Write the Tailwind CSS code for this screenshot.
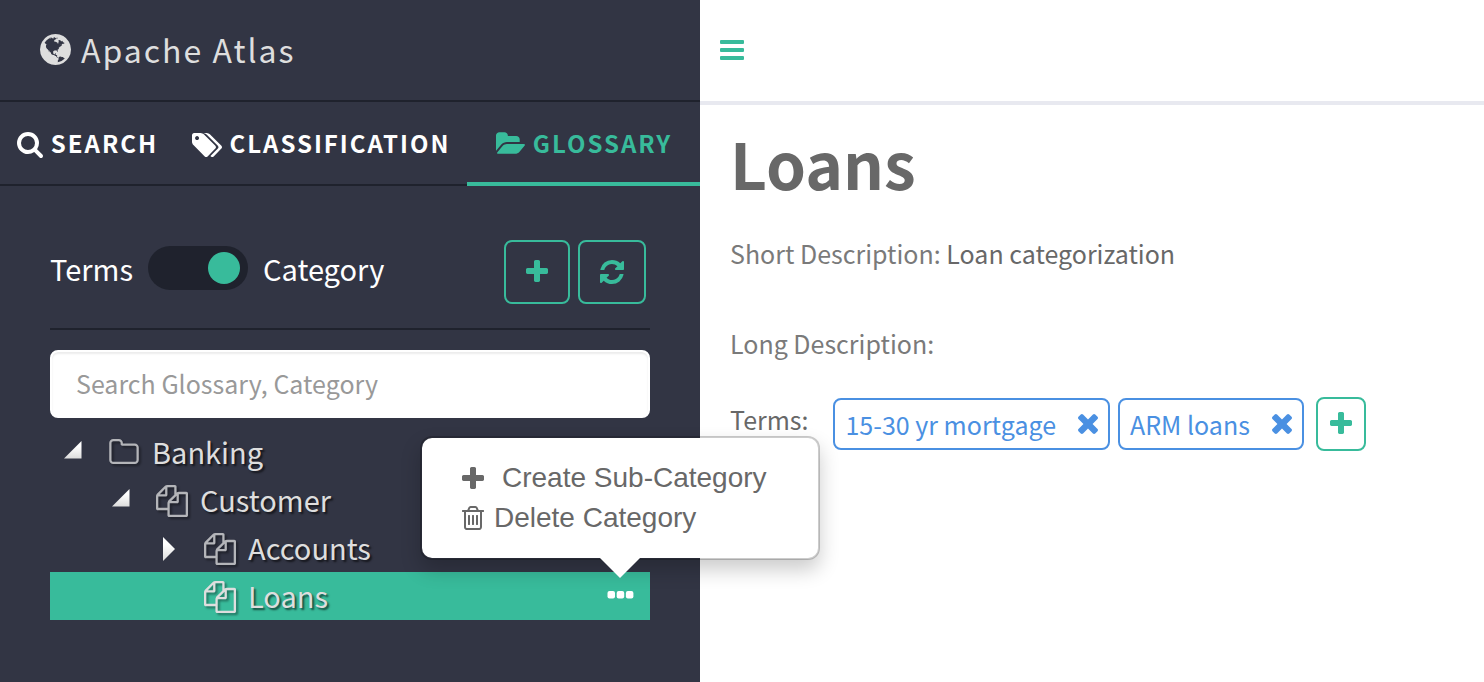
<!DOCTYPE html>
<html lang="en">
<head>
<meta charset="utf-8">
<title>Apache Atlas</title>
<script src="https://cdn.jsdelivr.net/npm/@tailwindcss/browser@4"></script>
</head>
<body class="bg-white font-['Noto_Sans_CJK_SC',sans-serif] text-[25px] leading-9 text-[#686868]">
<svg class="absolute size-0" aria-hidden="true">
  <symbol id="globe" viewBox="128 128 1536 1536"><path d="M896 128q209 0 385.5 103t279.5 279.5 103 385.5-103 385.5-279.5 279.5-385.5 103-385.5-103-279.5-279.5-103-385.5 103-385.5 279.5-279.5 385.5-103zm274 521q-2 1-9.5 9.5t-13.5 9.5q2 0 4.5-5t5-11 3.5-7q6-7 22-15 14-6 52-12 34-8 51 11-2-2 9.5-13t14.5-12q3-2 15-4.5t15-7.5l2-22q-12 1-17.5-7t-6.5-21q0 2-6 8 0-7-4.5-8t-11.5 1-9 1q-10-3-15-7.5t-8-16.5-4-15q-2-5-9.5-11t-9.5-10q-1-2-2.5-5.5t-3-6.5-4-5.5-5.5-2.5-7 5-7.5 10-4.5 5q-3-2-6-1.5t-4.5 1-4.5 3-5 3.5q-3 2-8.5 3t-8.5 2q15-5-1-11-10-4-16-3 9-4 7.5-12t-8.5-14h5q-1-4-8.5-8.5t-17.5-8.5-13-6q-8-5-34-9.5t-33-.5q-5 6-4.5 10.5t4 14 3.5 12.5q1 6-5.5 13t-6.5 12q0 7 14 15.5t10 21.5q-3 8-16 16t-16 12q-5 8-1.5 18.5t10.5 16.5q2 2 1.5 4t-3.5 4.5-5.5 4-6.5 3.5l-3 2q-11 5-20.5-6t-13.5-26q-7-25-16-30-23-8-29 1-5-13-41-26-25-9-58-4 6-1 0-15-7-15-19-12 3-6 4-17.5t1-13.5q3-13 12-23 1-1 7-8.5t9.5-13.5.5-6q35 4 50-11 5-5 11.5-17t10.5-17q9-6 14-5.5t14.5 5.5 14.5 5q14 1 15.5-11t-7.5-20q12 1 3-17-4-7-8-9-12-4-27 5-8 4 2 8-1-1-9.5 10.5t-16.5 17.5-16-5q-1-1-5.5-13.5t-9.5-13.5q-8 0-16 15 3-8-11-15t-24-8q19-12-8-27-7-4-20.5-5t-19.5 4q-5 7-5.5 11.5t5 8 10.5 5.5 11.5 4 8.5 3q14 10 8 14-2 1-8.5 3.5t-11.5 4.5-6 4q-3 4 0 14t-2 14q-5-5-9-17.5t-7-16.5q7 9-25 6l-10-1q-4 0-16 2t-20.5 1-13.5-8q-4-8 0-20 1-4 4-2-4-3-11-9.5t-10-8.5q-46 15-94 41 6 1 12-1 5-2 13-6.5t10-5.5q34-14 42-7l5-5q14 16 20 25-7-4-30-1-20 6-22 12 7 12 5 18-4-3-11.5-10t-14.5-11-15-5q-16 0-22 1-146 80-235 222 7 7 12 8 4 1 5 9t2.5 11 11.5-3q9 8 3 19 1-1 44 27 19 17 21 21 3 11-10 18-1-2-9-9t-9-4q-3 5 .5 18.5t10.5 12.5q-7 0-9.5 16t-2.5 35.5-1 23.5l2 1q-3 12 5.5 34.5t21.5 19.5q-13 3 20 43 6 8 8 9 3 2 12 7.5t15 10 10 10.5q4 5 10 22.5t14 23.5q-2 6 9.5 20t10.5 23q-1 0-2.5 1t-2.5 1q3 7 15.5 14t15.5 13q1 3 2 10t3 11 8 2q2-20-24-62-15-25-17-29-3-5-5.5-15.5t-4.5-14.5q2 0 6 1.5t8.5 3.5 7.5 4 2 3q-3 7 2 17.5t12 18.5 17 19 12 13q6 6 14 19.5t0 13.5q9 0 20 10t17 20q5 8 8 26t5 24q2 7 8.5 13.5t12.5 9.5l16 8 13 7q5 2 18.5 10.5t21.5 11.5q10 4 16 4t14.5-2.5 13.5-3.5q15-2 29 15t21 21q36 19 55 11-2 1 .5 7.5t8 15.5 9 14.5 5.5 8.5q5 6 18 15t18 15q6-4 7-9-3 8 7 20t18 10q14-3 14-32-31 15-49-18 0-1-2.5-5.5t-4-8.5-2.5-8.5 0-7.5 5-3q9 0 10-3.5t-2-12.5-4-13q-1-8-11-20t-12-15q-5 9-16 8t-16-9q0 1-1.5 5.5t-1.5 6.5q-13 0-15-1 1-3 2.5-17.5t3.5-22.5q1-4 5.5-12t7.5-14.5 4-12.5-4.5-9.5-17.5-2.5q-19 1-26 20-1 3-3 10.5t-5 11.5-9 7q-7 3-24 2t-24-5q-13-8-22.5-29t-9.5-37q0-10 2.5-26.5t3-25-5.5-24.5q3-2 9-9.5t10-10.5q2-1 4.5-1.5t4.5 0 4-1.5 3-6q-1-1-4-3-3-3-4-3 7 3 28.5-1.5t27.5 1.5q15 11 22-2 0-1-2.5-9.5t-.5-13.5q5 27 29 9 3 3 15.5 5t17.5 5q3 2 7 5.5t5.5 4.5 5-.5 8.5-6.5q10 14 12 24 11 40 19 44 7 3 11 2t4.5-9.5 0-14-1.5-12.5l-1-8v-18l-1-8q-15-3-18.5-12t1.5-18.5 15-18.5q1-1 8-3.5t15.5-6.5 12.5-8q21-19 15-35 7 0 11-9-1 0-5-3t-7.5-5-4.5-2q9-5 2-16 5-3 7.5-11t7.5-10q9 12 21 2 8-8 1-16 5-7 20.5-10.5t18.5-9.5q7 2 8-2t1-12 3-12q4-5 15-9t13-5l17-11q3-4 0-4 18 2 31-11 10-11-6-20 3-6-3-9.5t-15-5.5q3-1 11.5-.5t10.5-1.5q15-10-7-16-17-5-43 12zm-163 877q206-36 351-189-3-3-12.5-4.5t-12.5-3.5q-18-7-24-8 1-7-2.5-13t-8-9-12.5-8-11-7q-2-2-7-6t-7-5.5-7.5-4.5-8.5-2-10 1l-3 1q-3 1-5.5 2.5t-5.5 3-4 3 0 2.5q-21-17-36-22-5-1-11-5.5t-10.5-7-10-1.5-11.5 7q-5 5-6 15t-2 13q-7-5 0-17.5t2-18.5q-3-6-10.5-4.5t-12 4.5-11.5 8.5-9 6.5-8.5 5.5-8.5 7.5q-3 4-6 12t-5 11q-2-4-11.5-6.5t-9.5-5.5q2 10 4 35t5 38q7 31-12 48-27 25-29 40-4 22 12 26 0 7-8 20.5t-7 21.5q0 6 2 16z"/></symbol>
  <symbol id="search" viewBox="64 128 1664 1664"><path d="M1216 832q0-185-131.5-316.5t-316.5-131.5-316.5 131.5-131.5 316.5 131.5 316.5 316.5 131.5 316.5-131.5 131.5-316.5zm512 832q0 52-38 90t-90 38q-54 0-90-38l-343-342q-179 124-399 124-143 0-273.5-55.5t-225-150-150-225-55.5-273.5 55.5-273.5 150-225 225-150 273.5-55.5 273.5 55.5 225 150 150 225 55.5 273.5q0 220-124 399l343 343q37 37 37 90z"/></symbol>
  <symbol id="tags" viewBox="128 128 1899 1515"><path d="M576 448q0-53-37.5-90.5t-90.5-37.5-90.5 37.5-37.5 90.5 37.5 90.5 90.5 37.5 90.5-37.5 37.5-90.5zm1067 576q0 53-37 90l-491 492q-39 37-91 37-53 0-90-37l-715-716q-38-37-64.5-101t-26.5-117v-416q0-52 38-90t90-38h416q53 0 117 26.5t102 64.5l715 714q37 39 37 91zm384 0q0 53-37 90l-491 492q-39 37-91 37-36 0-59-14t-53-45l470-470q37-37 37-90 0-52-37-91l-715-714q-38-38-102-64.5t-117-26.5h224q53 0 117 26.5t102 64.5l715 714q37 39 37 91z"/></symbol>
  <symbol id="folder-open" viewBox="0 128 1943 1408"><path d="M1943 952q0 31-31 66l-336 396q-43 51-120.5 86.5t-143.5 35.5h-1088q-34 0-60.5-13t-26.5-43q0-31 31-66l336-396q43-51 120.5-86.5t143.5-35.5h1088q34 0 60.5 13t26.5 43zm-343-344v160h-832q-94 0-197 47.5t-164 119.5l-337 396-5 6q0-4-.5-12.5t-.5-12.5v-960q0-92 66-158t158-66h320q92 0 158 66t66 158v32h544q92 0 158 66t66 158z"/></symbol>
  <symbol id="folder" viewBox="0 128 1664 1408"><path d="M1536 1312v-704q0-40-28-68t-68-28h-704q-40 0-68-28t-28-68v-64q0-40-28-68t-68-28h-320q-40 0-68 28t-28 68v960q0 40 28 68t68 28h1216q40 0 68-28t28-68zm128-704v704q0 92-66 158t-158 66h-1216q-92 0-158-66t-66-158v-960q0-92 66-158t158-66h320q92 0 158 66t66 158v32h672q92 0 158 66t66 158z"/></symbol>
  <symbol id="files" viewBox="0 0 1792 1792"><path d="M1696 384q40 0 68 28t28 68v1216q0 40-28 68t-68 28h-960q-40 0-68-28t-28-68v-288h-544q-40 0-68-28t-28-68v-672q0-40 20-88t48-76l408-408q28-28 76-48t88-20h416q40 0 68 28t28 68v328q68-40 128-40h416zm-544 213l-299 299h299v-299zm-640-384l-299 299h299v-299zm196 647l316-316v-416h-384v416q0 40-28 68t-68 28h-416v640h512v-256q0-40 20-88t48-76zm956 804v-1152h-384v416q0 40-28 68t-68 28h-416v640h896z"/></symbol>
  <symbol id="plus" viewBox="192 128 1408 1408"><path d="M1600 736v192q0 40-28 68t-68 28h-416v416q0 40-28 68t-68 28h-192q-40 0-68-28t-28-68v-416h-416q-40 0-68-28t-28-68v-192q0-40 28-68t68-28h416v-416q0-40 28-68t68-28h192q40 0 68 28t28 68v416h416q40 0 68 28t28 68z"/></symbol>
  <symbol id="refresh" viewBox="128 128 1536 1536"><path d="M1639 1056q0 5-1 7-64 268-268 434.5t-478 166.5q-146 0-282.5-55t-243.5-157l-129 129q-19 19-45 19t-45-19-19-45v-448q0-26 19-45t45-19h448q26 0 45 19t19 45-19 45l-137 137q71 66 161 102t187 36q134 0 250-65t186-179q11-17 53-117 8-23 30-23h192q13 0 22.5 9.5t9.5 22.5zm25-800v448q0 26-19 45t-45 19h-448q-26 0-45-19t-19-45 19-45l138-138q-148-137-349-137-134 0-250 65t-186 179q-11 17-53 117-8 23-30 23h-199q-13 0-22.5-9.5t-9.5-22.5v-7q65-268 270-434.5t480-166.5q146 0 284 55.5t245 156.5l130-129q19-19 45-19t45 19 19 45z"/></symbol>
  <symbol id="times" viewBox="302 366 1188 1188"><path d="M1490 1322q0 40-28 68l-136 136q-28 28-68 28t-68-28l-294-294-294 294q-28 28-68 28t-68-28l-136-136q-28-28-28-68t28-68l294-294-294-294q-28-28-28-68t28-68l136-136q28-28 68-28t68 28l294 294 294-294q28-28 68-28t68 28l136 136q28 28 28 68t-28 68l-294 294 294 294q28 28 28 68z"/></symbol>
  <symbol id="trash" viewBox="192 128 1408 1536"><path d="M704 736v576q0 14-9 23t-23 9h-64q-14 0-23-9t-9-23v-576q0-14 9-23t23-9h64q14 0 23 9t9 23zm256 0v576q0 14-9 23t-23 9h-64q-14 0-23-9t-9-23v-576q0-14 9-23t23-9h64q14 0 23 9t9 23zm256 0v576q0 14-9 23t-23 9h-64q-14 0-23-9t-9-23v-576q0-14 9-23t23-9h64q14 0 23 9t9 23zm128 724v-948h-896v948q0 22 7 40.5t14.5 27 10.5 8.5h832q3 0 10.5-8.5t14.5-27 7-40.5zm-672-1076h448l-48-117q-7-9-17-11h-317q-10 2-17 11zm928 32v64q0 14-9 23t-23 9h-96v948q0 83-47 143.5t-113 60.5h-832q-66 0-113-58.5t-47-141.5v-952h-96q-14 0-23-9t-9-23v-64q0-14 9-23t23-9h309l70-167q15-37 54-63t79-26h320q40 0 79 26t54 63l70 167h309q14 0 23 9t9 23z"/></symbol>
  <symbol id="bars" viewBox="0 0 24 20"><path d="M1 0h22a1 1 0 0 1 1 1v2a1 1 0 0 1-1 1H1a1 1 0 0 1-1-1V1a1 1 0 0 1 1-1zM1 8h22a1 1 0 0 1 1 1v2a1 1 0 0 1-1 1H1a1 1 0 0 1-1-1V9a1 1 0 0 1 1-1zM1 16h22a1 1 0 0 1 1 1v2a1 1 0 0 1-1 1H1a1 1 0 0 1-1-1v-2a1 1 0 0 1 1-1z"/></symbol>
  <symbol id="dots" viewBox="0 0 26 8"><rect width="7.5" height="7.5" rx="2"/><rect x="9.2" width="7.5" height="7.5" rx="2"/><rect x="18.4" width="7.5" height="7.5" rx="2"/></symbol>
  <linearGradient id="shade" x1="0" y1="0" x2="0" y2="1"><stop offset="0.3" stop-color="#fff"/><stop offset="1" stop-color="#dcdcdc"/></linearGradient>
  <symbol id="open" viewBox="0 0 18 18"><path d="M17.5 0v17.5H0z" fill="url(#shade)"/></symbol>
  <symbol id="closed" viewBox="0 0 14 24"><path d="M1 0l12 12L1 24z" fill="url(#shade)"/></symbol>
</svg>
<div class="flex min-h-screen">
  <aside class="w-[700px] shrink-0 bg-[#323544] text-white">
    <header class="flex h-[102px] items-center gap-2.5 border-b-2 border-[#1f222d] pb-0.5 pl-10 text-[#dedede]">
      <svg class="size-[31px] fill-current" aria-hidden="true"><use href="#globe"/></svg>
      <span class="text-[32px] leading-[44px] tracking-[2px]">Apache Atlas</span>
    </header>
    <nav class="grid h-[84px] grid-cols-[175fr_292fr_233fr] text-[24px] font-bold tracking-[2px]">
      <a href="#" class="flex items-center justify-center gap-2 border-b-2 border-[#1f222d]"><svg class="mt-1 size-[26px] fill-current" aria-hidden="true"><use href="#search"/></svg>SEARCH</a>
      <a href="#" class="flex items-center justify-center gap-2 border-b-2 border-[#1f222d]"><svg class="mt-1 h-6 w-[30px] fill-current" aria-hidden="true"><use href="#tags"/></svg>CLASSIFICATION</a>
      <a href="#" class="flex items-center justify-center gap-2 border-b-4 border-[#38bb9b] pt-0.5 text-[#38bb9b]"><svg class="h-[22px] w-[30px] fill-current" aria-hidden="true"><use href="#folder-open"/></svg>GLOSSARY</a>
    </nav>
    <div class="px-[50px] pt-[54px]">
      <div class="flex h-[90px] items-start justify-between border-b-2 border-[#1f222d] pr-1">
        <label class="flex items-center gap-[15px] pt-1.5 text-[29px] leading-[42px]">Terms
          <span class="relative h-11 w-[100px] rounded-full bg-[#1f222d]">
            <input type="checkbox" role="switch" checked class="peer absolute inset-0 size-full cursor-pointer appearance-none rounded-full">
            <span class="pointer-events-none absolute top-1.5 left-1.5 size-8 rounded-full bg-[#38bb9b] peer-checked:left-[60px]"></span>
          </span>
          Category</label>
        <div class="flex gap-2 text-[#38bb9b]">
          <button aria-label="Add" class="flex h-16 w-[66px] items-center justify-center rounded-lg border-2 border-current pb-0.5"><svg class="size-[22px] fill-current"><use href="#plus"/></svg></button>
          <button aria-label="Refresh" class="flex h-16 w-[68px] items-center justify-center rounded-lg border-2 border-current"><svg class="size-6 fill-current"><use href="#refresh"/></svg></button>
        </div>
      </div>
      <input type="text" aria-label="Search Glossary, Category" placeholder="Search Glossary, Category" class="mt-5 block h-[68px] w-full rounded-lg border-2 border-white bg-white px-6 pb-0.5 text-[25px] text-[#555] inset-shadow-[0_2px_2px_rgba(0,0,0,0.08)] placeholder:text-[#999]">
      <ul class="mt-2.5 text-[29px] leading-[46px] text-[#dedede] text-shadow-[2px_2px_2px_rgba(0,0,0,0.6)]">
        <li class="flex h-12 items-center pb-0.5 pl-3.5"><svg class="mb-0.5 size-[18px]"><use href="#open"/></svg><svg class="mr-[13px] ml-[27px] h-[25px] w-[30px] fill-[#b4b5b9] drop-shadow-[2px_2px_1px_rgba(0,0,0,0.4)]"><use href="#folder"/></svg>Banking</li>
        <li class="flex h-12 items-center pb-0.5 pl-[62px]"><svg class="mb-0.5 size-[18px]"><use href="#open"/></svg><svg class="mt-1 mr-3 ml-[26px] size-8 fill-[#b4b5b9] drop-shadow-[2px_2px_1px_rgba(0,0,0,0.4)]"><use href="#files"/></svg>Customer</li>
        <li class="flex h-12 items-center pb-0.5 pl-28"><svg class="mt-1 h-6 w-3.5"><use href="#closed"/></svg><svg class="mt-1 mr-3 ml-7 size-8 fill-[#b4b5b9] drop-shadow-[2px_2px_1px_rgba(0,0,0,0.4)]"><use href="#files"/></svg>Accounts</li>
        <li class="relative flex h-12 items-center bg-[#38bb9b] pr-4 pb-0.5 pl-[154px]"><svg class="mt-1 mr-3 size-8 fill-[#dedede] drop-shadow-[2px_2px_1px_rgba(0,0,0,0.4)]"><use href="#files"/></svg>Loans
          <button aria-label="More" class="ml-auto"><svg class="h-2 w-[27px] fill-white"><use href="#dots"/></svg></button>
          <div role="menu" class="absolute right-[-170px] bottom-[60px] z-10 w-[400px] rounded-xl border-2 border-black/20 bg-white bg-clip-padding py-5 pl-10 font-['Liberation_Sans',sans-serif] text-[28px] leading-10 text-[#686868] shadow-[0_10px_20px_rgba(0,0,0,0.2)] text-shadow-none">
            <button role="menuitem" class="flex items-center gap-[18px]"><svg class="size-[22px] fill-current"><use href="#plus"/></svg>Create Sub-Category</button>
            <button role="menuitem" class="flex items-center gap-2.5"><svg class="h-6 w-[22px] fill-current"><use href="#trash"/></svg>Delete Category</button>
            <svg class="absolute top-full left-[178px] h-5 w-10 fill-white" viewBox="0 0 40 20"><path d="M0 0h40L20 20z"/></svg>
          </div>
        </li>
      </ul>
    </div>
  </aside>
  <main class="min-w-0 flex-1">
    <div class="flex h-[105px] items-center border-b-4 border-[#e8e9f0] pb-0.5 pl-5">
      <button aria-label="Toggle sidebar" class="text-[#38bb9b]"><svg class="h-5 w-6 fill-current"><use href="#bars"/></svg></button>
    </div>
    <div class="px-[30px] pt-5">
      <h1 class="text-[64px] leading-[74px] font-bold">Loans</h1>
      <p class="mt-9"><span class="text-[#7a7a7a]">Short Description:</span> Loan categorization</p>
      <p class="mt-[54px] text-[#7a7a7a]">Long Description:</p>
      <div class="mt-9 flex items-start">
        <span class="mr-[25px] pt-1">Terms:</span>
        <div class="flex items-center gap-2">
          <span class="flex h-[52px] items-center gap-[22px] rounded-lg border-2 border-current px-2.5 text-[#4a90e2]">15-30 yr mortgage<button aria-label="Remove 15-30 yr mortgage"><svg class="size-5 fill-current"><use href="#times"/></svg></button></span>
          <span class="flex h-[52px] items-center gap-[22px] rounded-lg border-2 border-current px-2.5 text-[#4a90e2]">ARM loans<button aria-label="Remove ARM loans"><svg class="size-5 fill-current"><use href="#times"/></svg></button></span>
          <button aria-label="Add term" class="ml-1 flex h-[54px] w-[50px] items-center justify-center rounded-lg border-2 border-current pb-0.5 text-[#38bb9b]"><svg class="size-[22px] fill-current"><use href="#plus"/></svg></button>
        </div>
      </div>
    </div>
  </main>
</div>
</body>
</html>
